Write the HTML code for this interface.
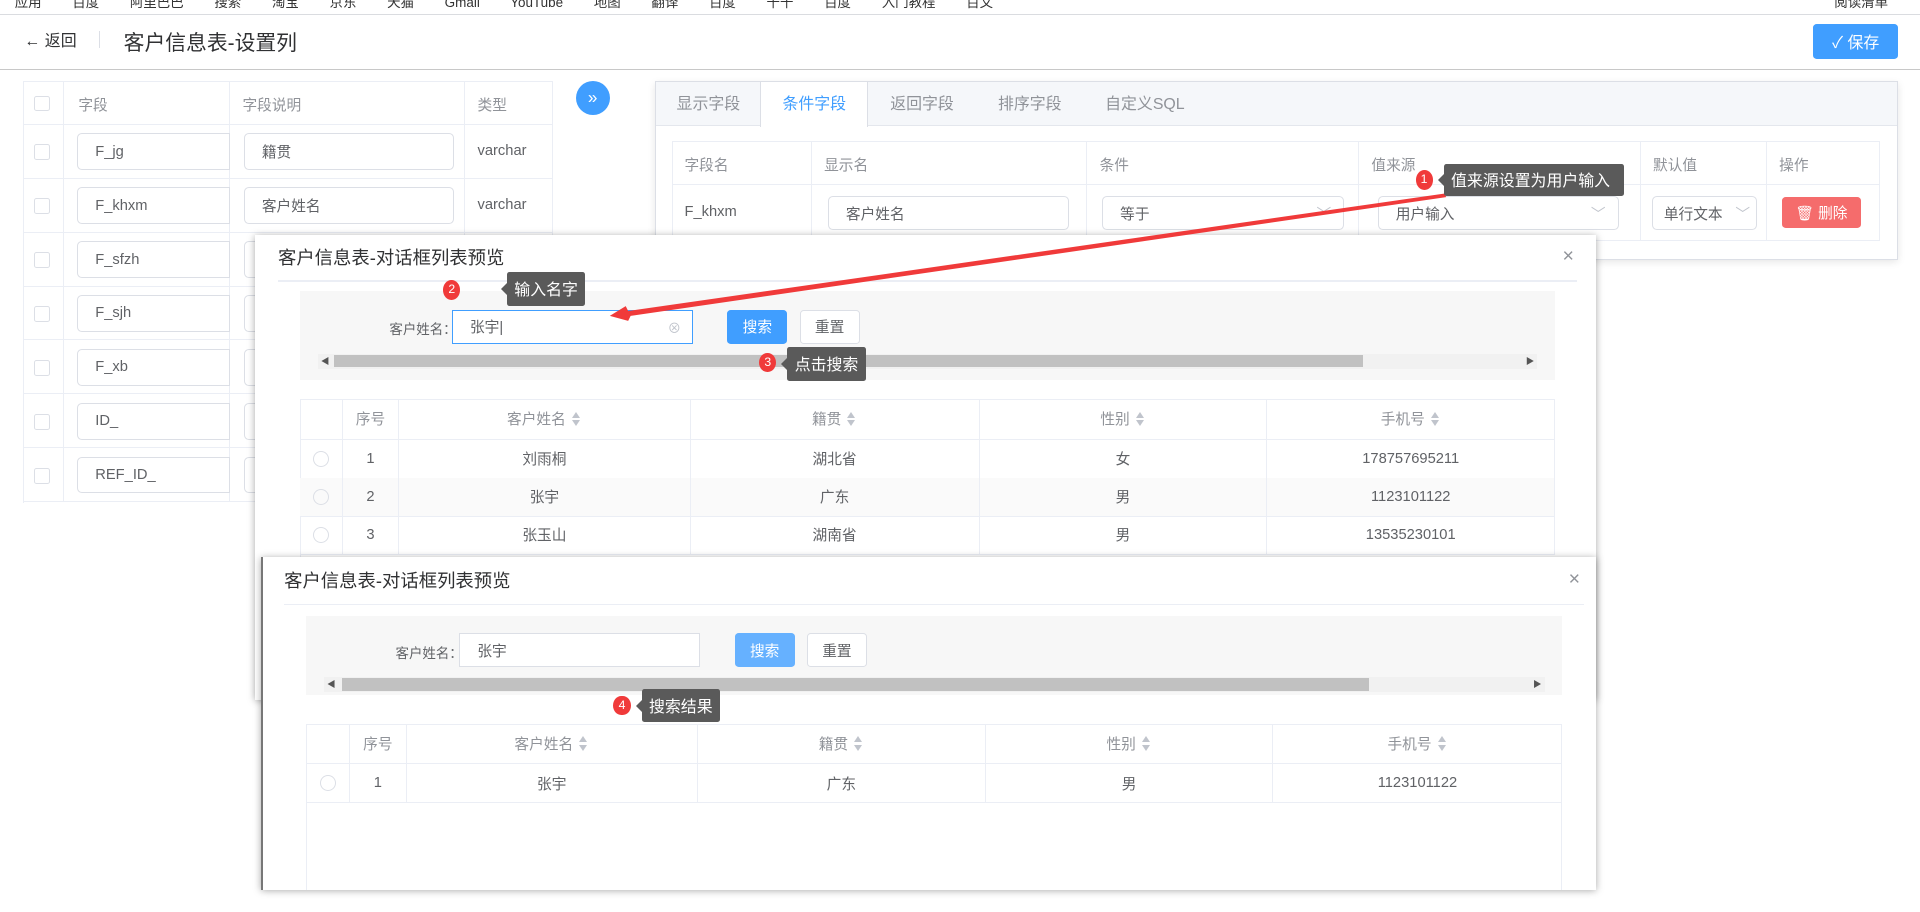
<!DOCTYPE html>
<html><head><meta charset="utf-8"><style>
*{box-sizing:border-box;margin:0;padding:0}
html,body{width:1920px;height:912px;overflow:hidden;background:#fff}
#root{zoom:1.22449;width:1568px;height:745px;position:relative;font-family:"Liberation Sans","Noto Sans CJK SC",sans-serif;font-size:12px;color:#606266}
.a{position:absolute}
.cell{position:absolute;border-right:1px solid #ebeef5;border-bottom:1px solid #ebeef5}
.inp{position:absolute;border:1px solid #dcdfe6;border-radius:4px;background:#fff;padding-left:14px;display:flex;align-items:center;color:#606266;white-space:nowrap}
.cb{position:absolute;width:13px;height:13px;border:1px solid #dcdfe6;border-radius:2px;background:#fff}
.tab{position:absolute;top:0;height:37px;line-height:37px;text-align:center;font-size:13px;color:#909399}
.btn{position:absolute;border-radius:3px;display:flex;align-items:center;justify-content:center;font-size:12px}
.tip{position:absolute;background:#5a5a5a;color:#fff;font-size:13px;display:flex;align-items:center;padding:0 6px;border-radius:2px;white-space:nowrap}
.tip:before{content:"";position:absolute;left:-5px;top:50%;margin-top:-5px;border:5px solid transparent;border-left:0;border-right-color:#5a5a5a}
.bd{position:absolute;width:14px;height:16px;border-radius:50%;background:#f03a3a;color:#fff;font-size:10px;text-align:center;line-height:16px}
.th{position:absolute;display:flex;align-items:center;justify-content:center;color:#909399;border-right:1px solid #ebeef5;border-bottom:1px solid #ebeef5}
.td{position:absolute;display:flex;align-items:center;justify-content:center;color:#606266;border-right:1px solid #ebeef5;border-bottom:1px solid #ebeef5}
.sort{display:inline-block;margin-left:5px;width:8px;height:12px;position:relative}
.sort:before{content:"";position:absolute;left:0;top:0;border:4px solid transparent;border-bottom:5px solid #c0c4cc;border-top:0}
.sort:after{content:"";position:absolute;left:0;bottom:0;border:4px solid transparent;border-top:5px solid #c0c4cc;border-bottom:0}
.radio{width:13px;height:13px;border:1px solid #dcdfe6;border-radius:50%}
</style></head><body><div id="root">

<div class="a" style="left:0;top:0;width:1568px;height:12px;background:#fff;border-bottom:1px solid #dadce0"></div>
<div class="a" style="left:12px;top:-7px;font-size:11px;color:#333;white-space:nowrap;word-spacing:22px">应用 百度 阿里巴巴 搜索 淘宝 京东 天猫 Gmail YouTube 地图 翻译 百度 千千 百度 入门教程 百文</div>
<div class="a" style="left:1498px;top:-7px;font-size:11px;color:#333">阅读清单</div>

<div class="a" style="left:20px;top:23px;font-size:13px;color:#303133">← 返回</div>
<div class="a" style="left:81px;top:25px;width:1px;height:14px;background:#dcdfe6"></div>
<div class="a" style="left:101px;top:21px;font-size:17px;color:#303133">客户信息表-设置列</div>
<div class="btn" style="left:1481px;top:20px;width:69px;height:28px;background:#409eff;color:#fff;font-size:13px">✓ 保存</div>
<div class="a" style="left:0;top:56px;width:1568px;height:1px;background:#c8c8c8"></div>

<div class="a" style="left:19px;top:66px;width:433px;height:345px;border-top:1px solid #ebeef5;border-left:1px solid #ebeef5"></div>
<div class="cell" style="left:19px;top:66px;width:33px;height:36px"></div>
<div class="cb" style="left:28px;top:78px"></div>
<div class="cell" style="left:52px;top:66px;width:136px;height:36px;padding:11px 0 0 12px;color:#909399">字段</div>
<div class="cell" style="left:188px;top:66px;width:192px;height:36px;padding:11px 0 0 10px;color:#909399">字段说明</div>
<div class="cell" style="left:380px;top:66px;width:72px;height:36px;padding:11px 0 0 10px;color:#909399">类型</div>
<div id="lrows"></div>

<div class="a" style="left:470px;top:66px;width:28px;height:28px;border-radius:50%;background:#409eff;color:#fff;text-align:center;line-height:27px;font-size:14px">»</div>

<div class="a" style="left:535px;top:66px;width:1015px;height:146px;border:1px solid #dcdfe6;background:#fff;box-shadow:0 2px 6px rgba(0,0,0,.1)"></div>
<div class="a" style="left:536px;top:67px;width:1013px;height:36px;background:#f5f7fa;border-bottom:1px solid #e4e7ed">
 <div class="tab" style="left:0;width:85px">显示字段</div>
 <div class="tab" style="left:85px;width:88px;background:#fff;color:#409eff;border-left:1px solid #dcdfe6;border-right:1px solid #dcdfe6;height:37px">条件字段</div>
 <div class="tab" style="left:173px;width:88px">返回字段</div>
 <div class="tab" style="left:261px;width:88px">排序字段</div>
 <div class="tab" style="left:349px;width:100px">自定义SQL</div>
</div>
<div class="a" style="left:549px;top:115px;width:986px;height:82px;border-top:1px solid #ebeef5;border-left:1px solid #ebeef5"></div>
<div class="cell" style="left:549px;top:115px;width:114px;height:36px;padding:11px 0 0 10px;color:#909399">字段名</div>
<div class="cell" style="left:663px;top:115px;width:225px;height:36px;padding:11px 0 0 10px;color:#909399">显示名</div>
<div class="cell" style="left:888px;top:115px;width:222px;height:36px;padding:11px 0 0 10px;color:#909399">条件</div>
<div class="cell" style="left:1110px;top:115px;width:230px;height:36px;padding:11px 0 0 10px;color:#909399">值来源</div>
<div class="cell" style="left:1340px;top:115px;width:103px;height:36px;padding:11px 0 0 10px;color:#909399">默认值</div>
<div class="cell" style="left:1443px;top:115px;width:92px;height:36px;padding:11px 0 0 10px;color:#909399">操作</div>
<div class="cell" style="left:549px;top:151px;width:114px;height:46px;padding:16px 0 0 10px">F_khxm</div>
<div class="cell" style="left:663px;top:151px;width:225px;height:46px"></div>
<div class="cell" style="left:888px;top:151px;width:222px;height:46px"></div>
<div class="cell" style="left:1110px;top:151px;width:230px;height:46px"></div>
<div class="cell" style="left:1340px;top:151px;width:103px;height:46px"></div>
<div class="cell" style="left:1443px;top:151px;width:92px;height:46px"></div>
<div class="inp" style="left:676px;top:160px;width:197px;height:28px">客户姓名</div>
<div class="inp" style="left:900px;top:160px;width:198px;height:28px">等于<span style="position:absolute;right:10px;color:#c0c4cc">﹀</span></div>
<div class="inp" style="left:1125px;top:160px;width:197px;height:28px">用户输入<span style="position:absolute;right:10px;color:#c0c4cc">﹀</span></div>
<div class="inp" style="left:1349px;top:160px;width:86px;height:28px;padding-left:9px">单行文本<span style="position:absolute;right:5px;color:#c0c4cc">﹀</span></div>
<div class="btn" style="left:1455px;top:161px;width:65px;height:25px;background:#f56c6c;color:#fff">🗑 删除</div>

<!-- dialog 1 -->
<div class="a" style="left:208px;top:192px;width:1095px;height:380px;background:#fff;box-shadow:0 1px 6px rgba(0,0,0,.35)"></div>
<div class="a" style="left:227px;top:199px;font-size:15px;color:#303133">客户信息表-对话框列表预览</div>
<div class="a" style="left:1276px;top:200px;font-size:16px;color:#909399">×</div>
<div class="a" style="left:227px;top:229px;width:1061px;height:1px;background:#ebeef5"></div>
<div class="a" style="left:245px;top:238px;width:1025px;height:72px;background:#f7f7f7"></div>
<div class="a" style="left:318px;top:260px;font-size:11px">客户姓名：</div>
<div class="inp" style="left:369px;top:253px;width:197px;height:28px;border-color:#409eff;border-radius:0">张宇|<span style="position:absolute;right:9px;color:#c0c4cc;font-size:11px">⊗</span></div>
<div class="btn" style="left:594px;top:253px;width:49px;height:28px;background:#409eff;color:#fff">搜索</div>
<div class="btn" style="left:653px;top:253px;width:49px;height:28px;background:#fff;border:1px solid #dcdfe6;color:#606266">重置</div>
<div class="a" style="left:260px;top:289px;width:995px;height:12px;background:#f1f1f1"></div>
<div class="a" style="left:273px;top:290px;width:840px;height:10px;background:#c1c1c1"></div>
<div class="a" style="left:262px;top:290px;font-size:7px;color:#555">◀</div>
<div class="a" style="left:1246px;top:290px;font-size:7px;color:#555">▶</div>
<div class="a" style="left:245px;top:326px;width:1025px;height:130px;border-top:1px solid #ebeef5;border-left:1px solid #ebeef5"></div>
<div id="t1"></div>

<!-- dialog 2 -->
<div class="a" style="left:213px;top:455px;width:1090px;height:272px;background:#fff;box-shadow:0 1px 6px rgba(0,0,0,.35);border-left:2px solid #777"></div>
<div class="a" style="left:232px;top:463px;font-size:15px;color:#303133">客户信息表-对话框列表预览</div>
<div class="a" style="left:1281px;top:464px;font-size:16px;color:#909399">×</div>
<div class="a" style="left:232px;top:493px;width:1062px;height:1px;background:#ebeef5"></div>
<div class="a" style="left:250px;top:503px;width:1026px;height:65px;background:#f7f7f7"></div>
<div class="a" style="left:323px;top:524px;font-size:11px">客户姓名：</div>
<div class="inp" style="left:375px;top:517px;width:197px;height:28px;border-radius:0">张宇</div>
<div class="btn" style="left:600px;top:517px;width:49px;height:28px;background:#66b1ff;color:#fff">搜索</div>
<div class="btn" style="left:659px;top:517px;width:49px;height:28px;background:#fff;border:1px solid #dcdfe6;color:#606266">重置</div>
<div class="a" style="left:265px;top:553px;width:997px;height:12px;background:#f1f1f1"></div>
<div class="a" style="left:279px;top:554px;width:839px;height:10px;background:#c1c1c1"></div>
<div class="a" style="left:267px;top:554px;font-size:7px;color:#555">◀</div>
<div class="a" style="left:1252px;top:554px;font-size:7px;color:#555">▶</div>
<div class="a" style="left:250px;top:591px;width:1026px;height:136px;border-top:1px solid #ebeef5;border-left:1px solid #ebeef5;border-right:1px solid #ebeef5"></div>
<div id="t2"></div>

<svg class="a" style="left:0;top:0" width="1568" height="745">
 <polygon points="1180,158 1181,161 515,258 513,262 498,258 511,250 513,254" fill="#f03a3a"/>
</svg>

<div class="bd" style="left:1156px;top:139px">1</div>
<div class="tip" style="left:1179px;top:134px;width:147px;height:26px">值来源设置为用户输入</div>
<div class="bd" style="left:362px;top:229px">2</div>
<div class="tip" style="left:414px;top:222px;height:28px">输入名字</div>
<div class="bd" style="left:620px;top:288px">3</div>
<div class="tip" style="left:643px;top:283px;height:28px">点击搜索</div>
<div class="bd" style="left:501px;top:568px">4</div>
<div class="tip" style="left:524px;top:563px;height:27px">搜索结果</div>

</div>
<script>
var R=document.getElementById('lrows'),h='';
var f=['F_jg','F_khxm','F_sfzh','F_sjh','F_xb','ID_','REF_ID_'],d=['籍贯','客户姓名','','','','',''];
f.forEach(function(x,i){var y=102+i*44;
h+='<div class="cell" style="left:19px;top:'+y+'px;width:33px;height:44px"></div><div class="cb" style="left:28px;top:'+(y+16)+'px"></div>';
h+='<div class="cell" style="left:52px;top:'+y+'px;width:136px;height:44px"></div><div class="inp" style="left:63px;top:'+(y+7)+'px;width:125px;height:30px;border-radius:4px 0 0 4px">'+x+'</div>';
h+='<div class="cell" style="left:188px;top:'+y+'px;width:192px;height:44px"></div><div class="inp" style="left:199px;top:'+(y+7)+'px;width:172px;height:30px">'+d[i]+'</div>';
h+='<div class="cell" style="left:380px;top:'+y+'px;width:72px;height:44px;padding:15px 0 0 10px">'+(i<2?'varchar':'')+'</div>';});
R.outerHTML=h;
function tbl(id,x0,y0,cols,rows){var s='',hd=['','序号','客户姓名','籍贯','性别','手机号'],so=[0,0,1,1,1,1];
for(var c=0;c<6;c++){s+='<div class="th" style="left:'+cols[c]+'px;top:'+y0+'px;width:'+(cols[c+1]-cols[c])+'px;height:33px">'+hd[c]+(so[c]?'<span class="sort"></span>':'')+'</div>';}
rows.forEach(function(r,i){var y=y0+33+i*31;for(var c=0;c<6;c++){s+='<div class="td" style="left:'+cols[c]+'px;top:'+y+'px;width:'+(cols[c+1]-cols[c])+'px;height:32px;'+(i==1?'background:#fafafa':'')+'">'+(c==0?'<div class="radio"></div>':r[c-1])+'</div>';}});
document.getElementById(id).outerHTML=s;}
tbl('t1',245,326,[245,280,326,564,800,1035,1270],[['1','刘雨桐','湖北省','女','178757695211'],['2','张宇','广东','男','1123101122'],['3','张玉山','湖南省','男','13535230101']]);
tbl('t2',250,591,[250,286,332,570,805,1040,1276],[['1','张宇','广东','男','1123101122']]);
</script>
</body></html>
